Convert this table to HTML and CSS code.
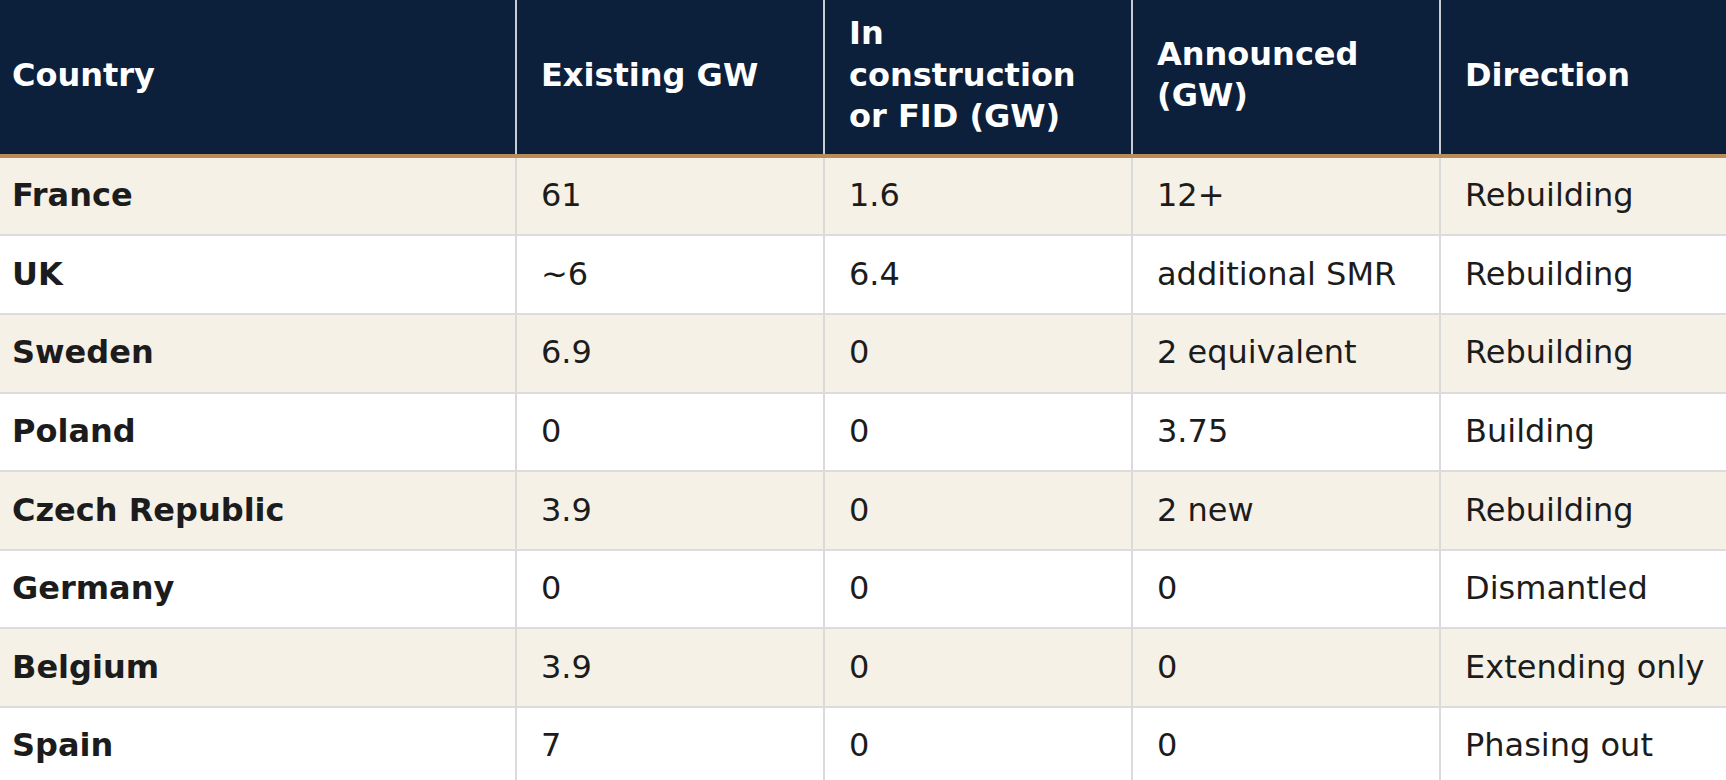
FILE: index.html
```html
<!DOCTYPE html>
<html lang="en">
<head>
<meta charset="utf-8">
<title>Nuclear capacity by country</title>
<link rel="stylesheet" href="styles.css">
</head>
<body>
<table class="data-table">
  <colgroup>
    <col class="col-country">
    <col class="col-num">
    <col class="col-num">
    <col class="col-num">
    <col class="col-dir">
  </colgroup>
  <thead>
    <tr>
      <th>Country</th>
      <th>Existing GW</th>
      <th>In construction or FID (GW)</th>
      <th>Announced (GW)</th>
      <th>Direction</th>
    </tr>
  </thead>
  <tbody>
    <tr><td>France</td><td>61</td><td>1.6</td><td>12+</td><td>Rebuilding</td></tr>
    <tr><td>UK</td><td>~6</td><td>6.4</td><td>additional SMR</td><td>Rebuilding</td></tr>
    <tr><td>Sweden</td><td>6.9</td><td>0</td><td>2 equivalent</td><td>Rebuilding</td></tr>
    <tr><td>Poland</td><td>0</td><td>0</td><td>3.75</td><td>Building</td></tr>
    <tr><td>Czech Republic</td><td>3.9</td><td>0</td><td>2 new</td><td>Rebuilding</td></tr>
    <tr><td>Germany</td><td>0</td><td>0</td><td>0</td><td>Dismantled</td></tr>
    <tr><td>Belgium</td><td>3.9</td><td>0</td><td>0</td><td>Extending only</td></tr>
    <tr><td>Spain</td><td>7</td><td>0</td><td>0</td><td>Phasing out</td></tr>
  </tbody>
</table>
</body>
</html>
```
FILE: styles.css
```css
html, body {
  margin: 0;
  padding: 0;
  background: #ffffff;
}

body {
  font-family: "DejaVu Sans", "Liberation Sans", sans-serif;
  font-size: 32px;
  color: #1c1c1c;
  overflow: hidden;
}

.data-table {
  width: 1726px;
  border-collapse: collapse;
  table-layout: fixed;
}

.col-country { width: 516px; }
.col-num { width: 308px; }
.col-dir { width: 286px; }

.data-table th,
.data-table td {
  text-align: left;
  vertical-align: middle;
  line-height: 41.6px;
  padding: 17.5px 24px;
  border-left: 2px solid #dadada;
}

.data-table th:first-child,
.data-table td:first-child {
  border-left: none;
  padding-left: 12px;
}

.data-table th {
  background: #0c203c;
  color: #ffffff;
  font-weight: bold;
  padding-top: 13px;
  padding-bottom: 16px;
  border-bottom: 4px solid #b98b56;
  border-left-color: #c9cdd3;
}

.data-table td {
  border-bottom: 2px solid #dcdcdc;
  white-space: nowrap;
}

.data-table td:first-child {
  font-weight: bold;
}

.data-table tbody tr:nth-child(odd) td {
  background: #f5f1e7;
}

.data-table tbody tr:nth-child(even) td {
  background: #ffffff;
}
```
